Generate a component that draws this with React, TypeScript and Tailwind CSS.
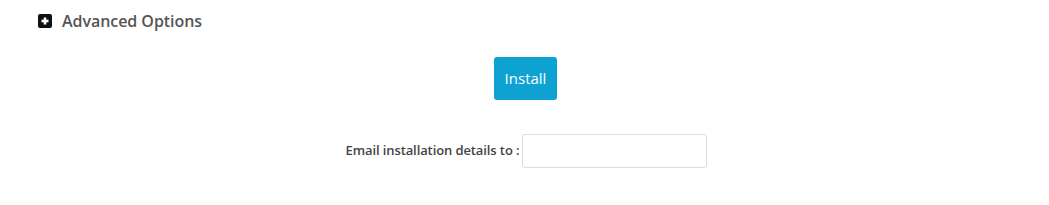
export default function App() {
  return (
    <div className="w-[1049px] h-[205px] bg-white" style={{ fontFamily: '"Open Sans", sans-serif' }}>
      <div className="flex items-center pl-[38px] pt-[11px] gap-[10px]">
        <div className="w-[14px] h-[14px] bg-[#111] rounded-[2px] flex items-center justify-center">
          <svg width="10" height="10" viewBox="0 0 10 10">
            <rect x="3.7" y="1.5" width="2.6" height="7" fill="#fff" />
            <rect x="1.5" y="3.7" width="7" height="2.6" fill="#fff" />
          </svg>
        </div>
        <span className="text-[16px] font-semibold text-[#555] leading-[20px] tracking-[-0.05px]">Advanced Options</span>
      </div>
      <div className="flex justify-center pt-[26px] pl-[2px]">
        <button className="w-[63px] h-[43px] bg-[#0ea2d3] rounded-[3px] text-white text-[15px] leading-none">Install</button>
      </div>
      <div className="flex items-center justify-center pt-[34px] pl-[4px]">
        <span className="text-[13px] font-semibold text-[#444] mr-[3px] tracking-[-0.1px]">Email installation details to :</span>
        <input className="w-[185px] h-[34px] border border-[#ddd] rounded-[3px] outline-none" />
      </div>
    </div>
  );
}
